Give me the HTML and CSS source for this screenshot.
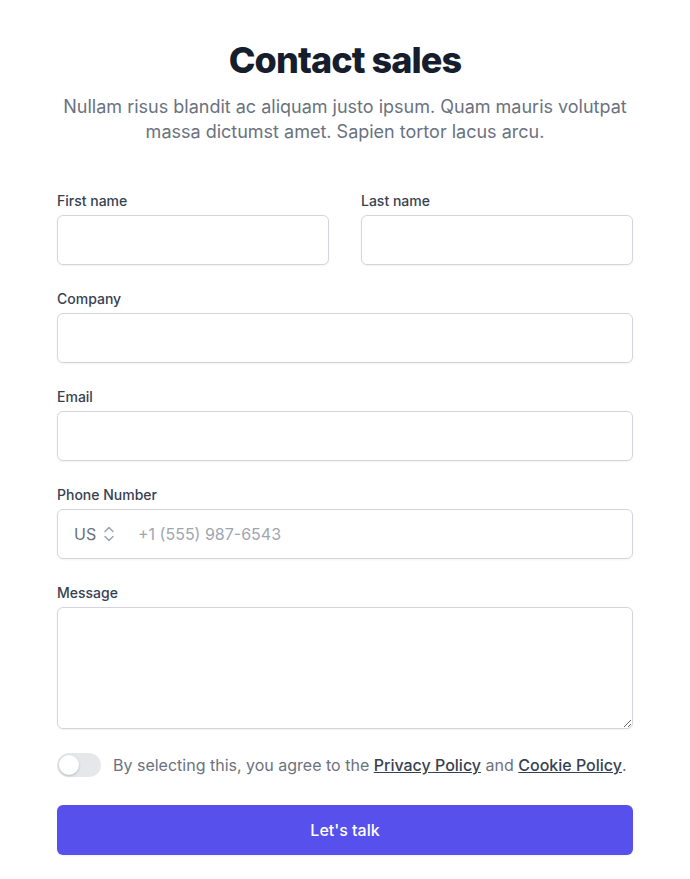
FILE: index.html
```html
<!DOCTYPE html>
<html lang="en">
<head>
<meta charset="utf-8">
<title>Contact sales</title>
<link rel="stylesheet" href="styles.css">
</head>
<body>
<main class="page">
  <div class="header">
    <h1 class="title">Contact sales</h1>
    <p class="lead">Nullam risus blandit ac aliquam justo ipsum. Quam mauris volutpat massa dictumst amet. Sapien tortor lacus arcu.</p>
  </div>
  <form class="form">
    <div class="field">
      <label class="label" for="first">First name</label>
      <input class="input" id="first" type="text">
    </div>
    <div class="field">
      <label class="label" for="last">Last name</label>
      <input class="input" id="last" type="text">
    </div>
    <div class="field full">
      <label class="label" for="company">Company</label>
      <input class="input" id="company" type="text">
    </div>
    <div class="field full">
      <label class="label" for="email">Email</label>
      <input class="input" id="email" type="email">
    </div>
    <div class="field full">
      <label class="label" for="phone">Phone Number</label>
      <div class="phone">
        <span class="country">US
          <svg class="chev" width="14" height="20" viewBox="0 0 14 20" fill="none" stroke="#9ca3af" stroke-width="1.5" stroke-linecap="round" stroke-linejoin="round"><path d="M3 7.5 7 3.5 11 7.5"/><path d="M3 12.5 7 16.5 11 12.5"/></svg>
        </span>
        <input class="phone-input" id="phone" type="text" placeholder="+1 (555) 987-6543">
      </div>
    </div>
    <div class="field full">
      <label class="label" for="message">Message</label>
      <textarea class="input textarea" id="message" rows="4"></textarea>
    </div>
    <div class="agree full">
      <span class="toggle"><span class="knob"></span></span>
      <p class="agree-text">By selecting this, you agree to the <a href="#">Privacy Policy</a> and <a href="#">Cookie Policy</a>.</p>
    </div>
    <div class="full">
      <button class="button" type="button">Let's talk</button>
    </div>
  </form>
</main>
</body>
</html>
```

FILE: styles.css
```css
* { box-sizing: border-box; }
html, body { margin: 0; padding: 0; background: #fff; }
body {
  font-family: Inter, "Noto Sans", sans-serif;
  color: #111827;
}
.page {
  padding: 40px 16px 24px;
}
.header {
  text-align: center;
  max-width: 576px;
  margin: 0 auto;
}
.title {
  margin: 0;
  font-size: 36px;
  line-height: 40px;
  font-weight: 800;
  letter-spacing: -0.025em;
  color: #161e2e;
}
.lead {
  margin: 14px 0 0;
  font-size: 18px;
  line-height: 25px;
  color: #6b7280;
}
.form {
  max-width: 576px;
  margin: 47px auto 0;
  display: grid;
  grid-template-columns: 1fr 1fr;
  column-gap: 32px;
  row-gap: 24px;
}
.full { grid-column: 1 / -1; }
.field { display: flex; flex-direction: column; gap: 4px; }
.label {
  font-size: 14px;
  line-height: 20px;
  font-weight: 500;
  color: #374151;
}
.input {
  display: block;
  width: 100%;
  height: 50px;
  padding: 12px 16px;
  border: 1px solid #d2d6dc;
  border-radius: 6px;
  font: inherit;
  font-size: 16px;
  line-height: 24px;
  box-shadow: 0 1px 2px rgba(0,0,0,0.05);
  background: #fff;
  outline: none;
}
.textarea {
  height: 122px;
  resize: both;
}
.phone {
  display: flex;
  align-items: center;
  height: 50px;
  border: 1px solid #d2d6dc;
  border-radius: 6px;
  box-shadow: 0 1px 2px rgba(0,0,0,0.05);
}
.country {
  display: flex;
  align-items: center;
  gap: 6px;
  width: 80px;
  padding-left: 16px;
  font-size: 16px;
  line-height: 24px;
  color: #6b7280;
}
.chev { display: block; }
.phone-input {
  flex: 1;
  border: 0;
  outline: none;
  padding: 12px 16px 12px 0;
  font: inherit;
  font-size: 16px;
  line-height: 24px;
  background: transparent;
}
.phone-input::placeholder { color: #9fa6b2; }
.agree {
  display: flex;
  align-items: center;
  gap: 12px;
  margin-bottom: 4px;
}
.toggle {
  flex-shrink: 0;
  width: 44px;
  height: 24px;
  border-radius: 12px;
  background: #e5e7eb;
  padding: 2px;
  display: flex;
}
.knob {
  width: 20px;
  height: 20px;
  border-radius: 50%;
  background: #fff;
  box-shadow: 0 1px 3px rgba(0,0,0,0.15), 0 1px 2px rgba(0,0,0,0.06);
}
.agree-text {
  margin: 0;
  font-size: 16px;
  line-height: 24px;
  color: #6b7280;
}
.agree-text a {
  color: #374151;
  font-weight: 500;
  text-decoration: underline;
}
.button {
  display: block;
  width: 100%;
  height: 50px;
  border: 0;
  border-radius: 6px;
  background: #5850ec;
  color: #fff;
  font: inherit;
  font-size: 16px;
  font-weight: 500;
  line-height: 24px;
  box-shadow: 0 1px 2px rgba(0,0,0,0.05);
}
```
